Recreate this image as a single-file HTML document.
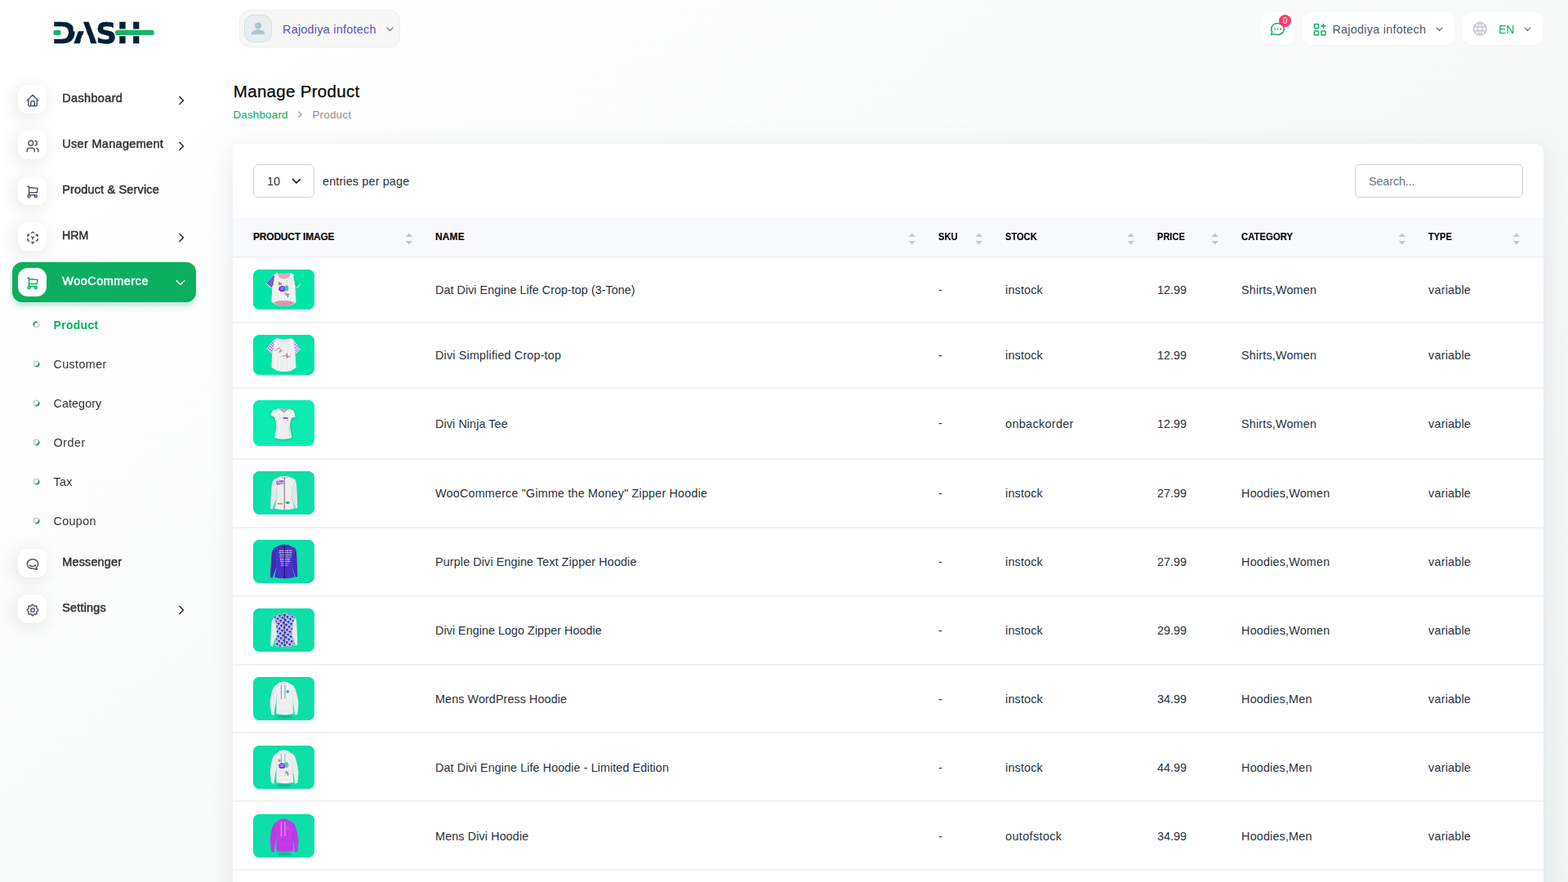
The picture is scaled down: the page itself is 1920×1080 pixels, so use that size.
<!DOCTYPE html>
<html lang="en">
<head>
<meta charset="utf-8">
<title>Manage Product</title>
<style>
*{box-sizing:border-box}
html,body{margin:0;padding:0}
body{width:1920px;height:1080px;overflow:hidden;position:relative;
 font-family:"Liberation Sans","DejaVu Sans",sans-serif;font-size:14px;color:#293240;
 background:linear-gradient(141.55deg,rgba(240,244,243,0) 3.46%,#f0f4f3 99.86%) 0 0/1920px 1290px no-repeat,#fff}
a{text-decoration:none;color:inherit}
ul{list-style:none;margin:0;padding:0}
svg{display:block}
.ic{fill:none;stroke:currentColor;stroke-width:2;stroke-linecap:round;stroke-linejoin:round}
.s16{stroke-width:1.600}.s18{stroke-width:1.800}.s20{stroke-width:2.200}

/* ---------- sidebar ---------- */
.sidebar{position:absolute;left:0;top:0;width:280px;height:1080px;will-change:transform;z-index:5}
.logo{position:absolute;left:60px;top:20px;width:140px;height:40px}
.nav{position:absolute;left:15px;top:97px;width:225px}
.nav>li{margin-bottom:7px}
.nav .link{display:block;position:relative;height:49px;border-radius:12px;color:#333}
.nav .micon{position:absolute;left:7px;top:7px;width:35px;height:35px;border-radius:12px;background:#fff;
 box-shadow:-3px 4px 23px rgba(0,0,0,.1);color:#525b69}
.nav .micon svg{position:absolute;left:8.500px;top:9.500px;width:18px;height:18px}
.nav .mtext{position:absolute;left:61.250px;top:0;height:49px;line-height:46px;font-size:14.500px;
 -webkit-text-stroke:.5px currentColor;white-space:nowrap}
.nav .arrow{position:absolute;right:11.500px;top:19px;width:14px;height:14px;color:#333}
.nav .active>.link{background:#0caf60;color:#fff;box-shadow:0 5px 7px -1px rgba(12,175,96,.3)}
.nav .active>.link .micon{color:#0caf60;box-shadow:none}
.nav .active>.link .arrow{color:#fff;right:12.500px;top:17.500px}
.sub li{position:relative;height:48px}
.sub li .dot{position:absolute;left:24.500px;top:22.500px;width:9px;height:9px}
.sub li a{position:absolute;left:50.500px;top:4px;line-height:48px;font-size:14.400px;color:#333;white-space:nowrap}
.sub li.on a{color:#0caf60;font-weight:700;font-size:14px}

/* ---------- header ---------- */
.hdr{position:absolute;left:280px;top:0;width:1640px;height:70px}
.pill{position:absolute;top:15px;height:40px;background:#fff;border-radius:12px;box-shadow:0 1px 3px rgba(0,0,0,.02)}
.pill .tx{position:absolute;top:1px;line-height:40px;font-size:14.400px;white-space:nowrap}
.user{position:absolute;left:13px;top:12px;width:197px;height:46px;background:#f7f7f7;border:1px solid #efefef;border-radius:13px}
.user .ava{position:absolute;left:5px;top:5px;width:34px;height:34px;border-radius:11px;background:#e9eef0;border:1px solid #c5ecd8;overflow:hidden}
.user .nm{position:absolute;left:52px;top:1px;line-height:44px;font-size:14.400px;color:#5b50c4;white-space:nowrap}
.chev{position:absolute;width:9px;height:5.500px;color:#6f7782}

/* ---------- main ---------- */
.title{position:absolute;left:285.800px;top:97px;margin:0;font-size:20.500px;line-height:30px;font-weight:400;color:#060606;
 -webkit-text-stroke:.25px currentColor;white-space:nowrap}
.crumb{position:absolute;left:285.400px;top:131px;height:20px;line-height:20px;font-size:13.400px;white-space:nowrap}
.crumb li{position:absolute;top:0}
.crumb .home{color:#0caf60;left:0}
.crumb .sep{left:78px;width:10px;height:20px;color:#8b9097}
.crumb .cur{color:#8b9097;left:97px}
.card{position:absolute;left:285px;top:176px;width:1605px;height:960px;background:#fff;border-radius:10px;
 box-shadow:0 6px 30px rgba(182,186,203,.3)}
.sel{position:absolute;left:25px;top:25px;width:75px;height:41px;border:1px solid #ced4da;border-radius:6px;background:#fff}
.sel span{position:absolute;left:16px;top:1px;line-height:39px;font-size:14.400px;color:#293240}
.sel svg{position:absolute;left:46px;top:16px;width:12px;height:8px;color:#111}
.epp{position:absolute;left:110px;top:26px;line-height:41px;font-size:14.400px;color:#293240;white-space:nowrap}
.search{position:absolute;left:1374px;top:25px;width:206px;height:41px;border:1px solid #ced4da;border-radius:6px;background:#fff}
.search span{position:absolute;left:16px;top:1px;line-height:39px;font-size:14.400px;color:#6c757d}
table{position:absolute;left:0;top:91px;width:1605px;border-collapse:separate;border-spacing:0;table-layout:fixed}
th{height:49px;background:#f8f9fd;border-bottom:2px solid #f1f1f1;text-align:left;padding:0 0 2px 24.300px;position:relative;
 font-size:12px;font-weight:700;text-transform:uppercase;color:#060606;white-space:nowrap;-webkit-text-stroke:.15px currentColor}
th:first-child,td:first-child{padding-left:25px}
th .sort{position:absolute;right:3.300px;top:17.500px;width:9.600px;height:15px;fill:#c6c6c6}
th:last-child .sort{right:28.300px}
td{border-bottom:2px solid #f1f1f1;padding:14px 0 15px 24.400px;vertical-align:middle;font-size:14.400px;color:#293240;white-space:nowrap}
tr.r3 td span{position:relative;top:1px}
tr.r1414 td{padding-top:14px;padding-bottom:14px}
tr.r1514 td{padding-top:15px;padding-bottom:14px}
.thumb{display:block;width:75px;border-radius:8px;overflow:hidden;background:#0be3a8}
.thumb svg{width:75px}
</style>
</head>
<body>
<aside class="sidebar"><svg class="logo" viewBox="60 20 140 40" role="img" aria-label="DASH">
<text x="63.300 90.400 117.300 143.200" y="53.200" font-family="DejaVu Sans, Liberation Sans, sans-serif" font-weight="700" font-size="36" fill="#022234" stroke="#022234" stroke-width=".5" stroke-linejoin="round">DASH</text>
<g fill="#fff">
<rect x="65" y="32.400" width="9" height="15.400"/>
<path d="M89.600 26.200H101.900L105.900 38.300H89.600Z"/>
<path d="M98.700 48.900H110L108.050 43.100H100.600Z"/>
<rect x="139.800" y="35.500" width="50.200" height="8.800" rx="4.400"/>
</g>
<g fill="#17b567">
<rect x="65.400" y="36.800" width="9.200" height="6.400" rx="3.200"/>
<rect x="141" y="36.700" width="47.800" height="6.400" rx="3.200"/>
</g>
</svg><ul class="nav"><li class=""><a class="link"><span class="micon"><svg class="ic" viewBox="0 0 24 24" aria-hidden="true"><polyline points="5 12 3 12 12 3 21 12 19 12"/><path d="M5 12v7a2 2 0 0 0 2 2h10a2 2 0 0 0 2 -2v-7"/><path d="M9 21v-6a2 2 0 0 1 2 -2h2a2 2 0 0 1 2 2v6"/></svg></span><span class="mtext" style="letter-spacing:0.339px;">Dashboard</span><svg class="arrow ic" viewBox="0 0 14 14" aria-hidden="true" style="stroke-width:1.700"><polyline points="5 2.500 9.500 7 5 11.500"/></svg></a></li><li class=""><a class="link"><span class="micon"><svg class="ic" viewBox="0 0 24 24" aria-hidden="true"><circle cx="9" cy="7" r="4"/><path d="M3 21v-2a4 4 0 0 1 4 -4h4a4 4 0 0 1 4 4v2"/><path d="M16 3.130a4 4 0 0 1 0 7.750"/><path d="M21 21v-2a4 4 0 0 0 -3 -3.850"/></svg></span><span class="mtext" style="letter-spacing:0.305px;">User Management</span><svg class="arrow ic" viewBox="0 0 14 14" aria-hidden="true" style="stroke-width:1.700"><polyline points="5 2.500 9.500 7 5 11.500"/></svg></a></li><li class=""><a class="link"><span class="micon"><svg class="ic" viewBox="0 0 24 24" aria-hidden="true"><circle cx="6" cy="19" r="2"/><circle cx="17" cy="19" r="2"/><path d="M17 17h-11v-14h-2"/><path d="M6 5l14 1l-1 7h-13"/></svg></span><span class="mtext" style="letter-spacing:0.155px;">Product &amp; Service</span></a></li><li class=""><a class="link"><span class="micon"><svg class="ic" viewBox="0 0 24 24" aria-hidden="true"><path d="M6 17.600l-2 -1.100v-2.500"/><path d="M4 10v-2.500l2 -1.100"/><path d="M10 4.100l2 -1.100l2 1.100"/><path d="M18 6.400l2 1.100v2.500"/><path d="M20 14v2.500l-2 1.120"/><path d="M14 19.900l-2 1.100l-2 -1.100"/><line x1="12" y1="12" x2="14" y2="10.900"/><line x1="18" y1="8.600" x2="20" y2="7.500"/><line x1="12" y1="12" x2="12" y2="14.500"/><line x1="12" y1="18.500" x2="12" y2="21"/><path d="M12 12l-2 -1.120"/><line x1="6" y1="8.600" x2="4" y2="7.500"/></svg></span><span class="mtext" style="display:inline-block;transform:scaleX(0.9762);transform-origin:0 50%;">HRM</span><svg class="arrow ic" viewBox="0 0 14 14" aria-hidden="true" style="stroke-width:1.700"><polyline points="5 2.500 9.500 7 5 11.500"/></svg></a></li><li class="active"><a class="link"><span class="micon"><svg class="ic" viewBox="0 0 24 24" aria-hidden="true"><circle cx="6" cy="19" r="2"/><circle cx="17" cy="19" r="2"/><path d="M17 17h-11v-14h-2"/><path d="M6 5l14 1l-1 7h-13"/></svg></span><span class="mtext" style="letter-spacing:0.480px;">WooCommerce</span><svg class="arrow ic" viewBox="0 0 14 14" aria-hidden="true" style="stroke-width:1.700"><polyline points="2.500 5 7 9.500 11.500 5"/></svg></a><ul class="sub"><li class="on"><svg class="dot" viewBox="0 0 9 9" aria-hidden="true" fill="none" stroke-width="1.900" stroke-linecap="round"><circle cx="4.500" cy="4.500" r="3.150" stroke="#cdd1dc"/><path d="M1.350 4.700A3.150 3.150 0 0 1 4.700 1.350" stroke="#0caf60"/></svg><a style="letter-spacing:0.301px;">Product</a></li><li class=""><svg class="dot" viewBox="0 0 9 9" aria-hidden="true" fill="none" stroke-width="1.900" stroke-linecap="round"><circle cx="4.500" cy="4.500" r="3.150" stroke="#cdd1dc"/><path d="M7.650 4.300A3.150 3.150 0 0 1 4.300 7.650" stroke="#0caf60"/></svg><a style="letter-spacing:0.341px;">Customer</a></li><li class=""><svg class="dot" viewBox="0 0 9 9" aria-hidden="true" fill="none" stroke-width="1.900" stroke-linecap="round"><circle cx="4.500" cy="4.500" r="3.150" stroke="#cdd1dc"/><path d="M7.650 4.300A3.150 3.150 0 0 1 4.300 7.650" stroke="#0caf60"/></svg><a style="letter-spacing:0.050px;">Category</a></li><li class=""><svg class="dot" viewBox="0 0 9 9" aria-hidden="true" fill="none" stroke-width="1.900" stroke-linecap="round"><circle cx="4.500" cy="4.500" r="3.150" stroke="#cdd1dc"/><path d="M7.650 4.300A3.150 3.150 0 0 1 4.300 7.650" stroke="#0caf60"/></svg><a style="letter-spacing:0.500px;">Order</a></li><li class=""><svg class="dot" viewBox="0 0 9 9" aria-hidden="true" fill="none" stroke-width="1.900" stroke-linecap="round"><circle cx="4.500" cy="4.500" r="3.150" stroke="#cdd1dc"/><path d="M7.650 4.300A3.150 3.150 0 0 1 4.300 7.650" stroke="#0caf60"/></svg><a style="letter-spacing:0.244px;">Tax</a></li><li class=""><svg class="dot" viewBox="0 0 9 9" aria-hidden="true" fill="none" stroke-width="1.900" stroke-linecap="round"><circle cx="4.500" cy="4.500" r="3.150" stroke="#cdd1dc"/><path d="M7.650 4.300A3.150 3.150 0 0 1 4.300 7.650" stroke="#0caf60"/></svg><a style="letter-spacing:0.314px;">Coupon</a></li></ul></li><li class=""><a class="link"><span class="micon"><svg class="ic" viewBox="0 0 24 24" aria-hidden="true"><path d="M17.802 17.292s.077 -.055 .200 -.149c1.843 -1.425 3 -3.490 3 -5.789c0 -4.286 -4.030 -7.764 -9 -7.764c-4.970 0 -9 3.478 -9 7.764c0 4.288 4.030 7.646 9 7.646c.424 0 1.120 -.028 2.088 -.084c1.262 .820 3.104 1.493 4.716 1.493c.499 0 .734 -.410 .414 -.828c-.486 -.596 -1.156 -1.551 -1.416 -2.290z"/><path d="M7.500 13.500c2.500 2.500 6.500 2.500 9 0"/></svg></span><span class="mtext" style="letter-spacing:0.125px;">Messenger</span></a></li><li class=""><a class="link"><span class="micon"><svg class="ic" viewBox="0 0 24 24" aria-hidden="true"><path d="M10.325 4.317c.426 -1.756 2.924 -1.756 3.350 0a1.724 1.724 0 0 0 2.573 1.066c1.543 -.940 3.310 .826 2.370 2.370a1.724 1.724 0 0 0 1.065 2.572c1.756 .426 1.756 2.924 0 3.350a1.724 1.724 0 0 0 -1.066 2.573c.940 1.543 -.826 3.310 -2.370 2.370a1.724 1.724 0 0 0 -2.572 1.065c-.426 1.756 -2.924 1.756 -3.350 0a1.724 1.724 0 0 0 -2.573 -1.066c-1.543 .940 -3.310 -.826 -2.370 -2.370a1.724 1.724 0 0 0 -1.065 -2.572c-1.756 -.426 -1.756 -2.924 0 -3.350a1.724 1.724 0 0 0 1.066 -2.573c-.940 -1.543 .826 -3.310 2.370 -2.370c1 .608 2.296 .070 2.572 -1.065z"/><circle cx="12" cy="12" r="3"/></svg></span><span class="mtext" style="letter-spacing:0.154px;">Settings</span><svg class="arrow ic" viewBox="0 0 14 14" aria-hidden="true" style="stroke-width:1.700"><polyline points="5 2.500 9.500 7 5 11.500"/></svg></a></li></ul></aside>
<header class="hdr">
<div class="user"><span class="ava"><svg viewBox="0 0 34 34" width="32" height="32"><circle cx="17" cy="13.200" r="4.300" fill="#b1c5ce"/><path d="M8 24.600c0-4 4-6.300 9-6.300s9 2.300 9 6.300z" fill="#b1c5ce"/></svg></span><span class="nm" style="letter-spacing:0.250px;">Rajodiya infotech</span><svg class="chev ic" viewBox="0 0 9 5.500" style="left:179px;top:20px;stroke-width:1.250"><polyline points="0.900 0.900 4.500 4.500 8.100 0.900"/></svg></div>
<div class="pill" style="left:1263px;width:42px"><span style="position:absolute;left:10.500px;top:10px;width:21px;height:21px;color:#0caf60"><svg class="ic s16" viewBox="0 0 24 24" aria-hidden="true"><path d="M3 20l1.300 -3.900a9 8 0 1 1 3.400 2.900l-4.700 1"/><g stroke-width="2.400"><line x1="12" y1="12" x2="12" y2="12.010"/><line x1="8" y1="12" x2="8" y2="12.010"/><line x1="16" y1="12" x2="16" y2="12.010"/></g></svg></span><span style="position:absolute;left:23px;top:2.500px;width:15px;height:15px;border-radius:50%;background:#ff3a6e;color:#fff;font-size:10px;line-height:15px;text-align:center">0</span></div>
<div class="pill" style="left:1315px;width:186px"><span style="position:absolute;left:11.300px;top:10.800px;width:20.500px;height:20.500px;color:#0caf60"><svg class="ic s18" viewBox="0 0 24 24" aria-hidden="true"><rect x="4" y="4" width="6" height="6" rx="1"/><rect x="4" y="14" width="6" height="6" rx="1"/><rect x="14" y="14" width="6" height="6" rx="1"/><line x1="14" y1="7" x2="20" y2="7"/><line x1="17" y1="4" x2="17" y2="10"/></svg></span><span class="tx" style="left:36.400px;color:#525b69;letter-spacing:0.258px;">Rajodiya infotech</span><svg class="chev ic" viewBox="0 0 9 5.500" style="left:163px;top:18px;stroke-width:1.250"><polyline points="0.900 0.900 4.500 4.500 8.100 0.900"/></svg></div>
<div class="pill" style="left:1511px;width:98px"><span style="position:absolute;left:11.200px;top:9.800px;width:20.500px;height:20.500px;color:#cbced3"><svg class="ic s20" viewBox="0 0 24 24" aria-hidden="true"><circle cx="12" cy="12" r="9"/><line x1="3.600" y1="9" x2="20.400" y2="9"/><line x1="3.600" y1="15" x2="20.400" y2="15"/><path d="M11.500 3a17 17 0 0 0 0 18"/><path d="M12.500 3a17 17 0 0 1 0 18"/></svg></span><span class="tx" style="left:44px;color:#0caf60;display:inline-block;transform:scaleX(0.9760);transform-origin:0 50%;">EN</span><svg class="chev ic" viewBox="0 0 9 5.500" style="left:75px;top:18px;stroke-width:1.250"><polyline points="0.900 0.900 4.500 4.500 8.100 0.900"/></svg></div>
</header>
<main>
<h4 class="title" style="letter-spacing:0.304px;">Manage Product</h4>
<ul class="crumb"><li class="home"><a style="letter-spacing:0.202px;">Dashboard</a></li><li class="sep"><svg class="ic" viewBox="0 0 8 10" style="position:absolute;left:0.500px;top:4.500px;width:6.500px;height:8.500px;stroke-width:1.400;color:#9aa0a8"><polyline points="2 1 6 5 2 9"/></svg></li><li class="cur"><span style="letter-spacing:0.221px;">Product</span></li></ul>
<section class="card">
<div class="sel"><span>10</span><svg class="ic" viewBox="0 0 12 8" style="stroke-width:1.600"><polyline points="1.500 1.500 6 6 10.500 1.500"/></svg></div>
<div class="epp"><span style="letter-spacing:0.143px;">entries per page</span></div>
<div class="search"><span style="letter-spacing:-0.127px;">Search...</span></div>
<table>
<thead><tr><th style="width:223.7px"><span style="letter-spacing:-0.201px;">Product Image</span><svg class="sort" viewBox="0 0 9 15" preserveAspectRatio="none" aria-hidden="true"><path d="M4.500 0.500L8.500 5H0.500z"/><path d="M4.500 14.500L8.500 10H0.500z"/></svg></th><th style="width:616px"><span style="letter-spacing:0.139px;">Name</span><svg class="sort" viewBox="0 0 9 15" preserveAspectRatio="none" aria-hidden="true"><path d="M4.500 0.500L8.500 5H0.500z"/><path d="M4.500 14.500L8.500 10H0.500z"/></svg></th><th style="width:82px"><span style="display:inline-block;transform:scaleX(0.9322);transform-origin:0 50%;">SKU</span><svg class="sort" viewBox="0 0 9 15" preserveAspectRatio="none" aria-hidden="true"><path d="M4.500 0.500L8.500 5H0.500z"/><path d="M4.500 14.500L8.500 10H0.500z"/></svg></th><th style="width:186px"><span style="display:inline-block;transform:scaleX(0.9253);transform-origin:0 50%;">Stock</span><svg class="sort" viewBox="0 0 9 15" preserveAspectRatio="none" aria-hidden="true"><path d="M4.500 0.500L8.500 5H0.500z"/><path d="M4.500 14.500L8.500 10H0.500z"/></svg></th><th style="width:103px"><span style="display:inline-block;transform:scaleX(0.9215);transform-origin:0 50%;">Price</span><svg class="sort" viewBox="0 0 9 15" preserveAspectRatio="none" aria-hidden="true"><path d="M4.500 0.500L8.500 5H0.500z"/><path d="M4.500 14.500L8.500 10H0.500z"/></svg></th><th style="width:229px"><span style="display:inline-block;transform:scaleX(0.9461);transform-origin:0 50%;">Category</span><svg class="sort" viewBox="0 0 9 15" preserveAspectRatio="none" aria-hidden="true"><path d="M4.500 0.500L8.500 5H0.500z"/><path d="M4.500 14.500L8.500 10H0.500z"/></svg></th><th style="width:165.3px"><span style="display:inline-block;transform:scaleX(0.9192);transform-origin:0 50%;">Type</span><svg class="sort" viewBox="0 0 9 15" preserveAspectRatio="none" aria-hidden="true"><path d="M4.500 0.500L8.500 5H0.500z"/><path d="M4.500 14.500L8.500 10H0.500z"/></svg></th></tr></thead>
<tbody>
<tr>
<td><a class="thumb" style="height:49px"><svg viewBox="0 0 75 49" height="49" aria-hidden="true"><rect width="75" height="49" fill="#01e4a7"/><g style="filter:blur(0.35px)"><path d="M28.9 3.9C33 6.2 42.5 6.2 46.4 3.9L50.6 7.2L57.7 17.9L53.2 22.7L51.4 20.8L52.5 39.9C49 43.5 43 45.1 38 45.1C32 45.1 26 43.3 22.4 39.6L23.3 21L22.1 22.7L16.2 17.2L24.3 7.2Z" fill="#f2f1f2"/><path d="M30.500 9v33M34.500 10v34M41.500 10v34M46 9v33" stroke="#e1e0e2" stroke-width=".5" fill="none"/><path d="M24.300 7.200L16.200 17.200L22.100 22.700L24.800 18.500C25.300 13.500 25.600 10.500 26.200 8.200Z" fill="#7a5fd0"/><path d="M50.600 7.200L57.700 17.900L53.200 22.700L51 19C50.600 14 50 10.500 49.200 8.200Z" fill="#10d3a0"/><path d="M16.200 17.200L22.100 22.700M57.700 17.900L53.200 22.700" stroke="#fff" stroke-width="1" fill="none"/><path d="M29.800 4.300C33.500 6.400 42 6.400 45.600 4.300C45 9.500 41.500 11.700 37.800 11.700C34 11.700 30.500 9.500 29.800 4.300Z" fill="#eba5ba"/><path d="M24.500 40.800C28 38.600 33 37.900 38 37.900C43 37.900 48 38.800 51 40.800C48 43.600 43 45.100 38 45.100C33 45.100 28 43.600 24.500 40.800Z" fill="#de93ad"/><ellipse cx="35.600" cy="23.700" rx="4.300" ry="3.400" fill="#6a2fe0"/><ellipse cx="41" cy="22.900" rx="2.300" ry="3.700" fill="#3fcbb2"/><path d="M33.500 22.500h4M33.500 24.300h3.500" stroke="#e9e2ff" stroke-width=".7" fill="none"/><path d="M30.800 19.500l1.200-4.200l.6 3.600l1.600-2.800l.2 3M39 30.500c.3-2.500 1.500-2.700 1.200 0c-.2 1.700.800 2.200 1.800-1.200l.4 4.700l.9-4.200l1 1.200" stroke="#222" stroke-width=".45" fill="none"/></g></svg></a></td>
<td><span style="letter-spacing:0.015px;">Dat Divi Engine Life Crop-top (3-Tone)</span></td>
<td>-</td>
<td><span style="letter-spacing:0.146px;">instock</span></td>
<td><span style="letter-spacing:-0.046px;">12.99</span></td>
<td><span style="letter-spacing:0.156px;">Shirts,Women</span></td>
<td><span style="letter-spacing:0.200px;">variable</span></td>
</tr>
<tr>
<td><a class="thumb" style="height:49px"><svg viewBox="0 0 75 49" height="49" aria-hidden="true"><rect width="75" height="49" fill="#01e4a7"/><g style="filter:blur(0.35px)"><defs><pattern id="pdots" width="2.600" height="2.600" patternUnits="userSpaceOnUse" patternTransform="rotate(38)"><rect width="2.600" height="2.600" fill="#f4f2fb"/><circle cx="1.300" cy="1.300" r=".85" fill="#5a36e0"/></pattern></defs><path d="M28.9 3.9C33 6.2 42.5 6.2 46.4 3.9L50.6 7.2L57.7 17.9L53.2 22.7L51.4 20.8L52.5 39.9C49 43.5 43 45.1 38 45.1C32 45.1 26 43.3 22.4 39.6L23.3 21L22.1 22.7L16.2 17.2L24.3 7.2Z" fill="#f2f1f2"/><path d="M30.500 9v33M34.500 10v34M41.500 10v34M46 9v33" stroke="#e1e0e2" stroke-width=".5" fill="none"/><path d="M24.300 7.200L16.200 17.200L22.100 22.700L24.800 18.500C25.300 13.500 25.600 10.500 26.200 8.200Z" fill="url(#pdots)"/><path d="M50.600 7.200L57.700 17.900L53.200 22.700L51 19C50.600 14 50 10.500 49.200 8.200Z" fill="url(#pdots)"/><path d="M29.800 4.300C33.500 6.400 42 6.400 45.600 4.300C45 8.500 41.500 10.300 37.800 10.300C34 10.300 30.500 8.500 29.800 4.300Z" fill="#e4e3e5"/><path d="M26.800 20c1.500-2 3.500-3.700 5.200-3.700c2.200 0 1 3.700.2 5.200c2-2.500 3.300-2.700 4-1.700M35.200 26.600c1.200-1.800 2.400-1.600 2.200-.200c1.400-1.400 2.400-.800 3 0l1-3.600l.4 5.600l1-2.800l1.400 1.200l1.300-.6" stroke="#222" stroke-width=".45" fill="none"/></g></svg></a></td>
<td><span style="letter-spacing:0.152px;">Divi Simplified Crop-top</span></td>
<td>-</td>
<td><span style="letter-spacing:0.146px;">instock</span></td>
<td><span style="letter-spacing:-0.046px;">12.99</span></td>
<td><span style="letter-spacing:0.156px;">Shirts,Women</span></td>
<td><span style="letter-spacing:0.200px;">variable</span></td>
</tr>
<tr class="r3">
<td><a class="thumb" style="height:56px"><svg viewBox="0 0 75 56" height="56" aria-hidden="true"><rect width="75" height="56" fill="#0cebb0"/><g style="filter:blur(0.35px)"><path d="M31.200 10.200L37.600 15.600L43.800 10.600L49.300 12.400C50.600 15 51.300 17.800 51.600 20.500L47 22.100C46 25.500 45.100 28.500 45.100 31.500C45.300 36.500 46.700 41.500 47.400 45.700C44 47.300 40 47.700 36.700 47.700C33 47.700 29 47.200 26 45.700C26.800 41.500 28.200 36.500 28.200 31.500C28.100 28.500 27.300 25 26.300 21.100L21.400 18.500C22 16 22.700 14 23.700 12.400Z" fill="#0a9f77" opacity=".55" transform="translate(.6 1)" style="filter:blur(1.4px)"/><path d="M31.200 10.200L37.600 15.600L43.800 10.600L49.300 12.400C50.600 15 51.300 17.800 51.600 20.500L47 22.100C46 25.500 45.100 28.500 45.100 31.500C45.300 36.500 46.700 41.500 47.400 45.700C44 47.300 40 47.700 36.700 47.700C33 47.700 29 47.200 26 45.700C26.800 41.500 28.200 36.500 28.200 31.500C28.100 28.500 27.300 25 26.300 21.100L21.400 18.500C22 16 22.700 14 23.700 12.400Z" fill="#f1f0f1"/><path d="M31.200 10.200C33.500 9.700 41.500 9.900 43.800 10.600L37.600 15.600Z" fill="#b4b3b5"/><path d="M28.500 24c1 6 1 16-.5 21M45 24c-1 6-1 16 .5 21" stroke="#dddcdf" stroke-width="1.500" fill="none"/><circle cx="33.600" cy="21.800" r="2.300" fill="none" stroke="#9fded8" stroke-width=".5"/><rect x="36.600" y="20.900" width="6.200" height="2.100" rx=".4" fill="#9a4fe0"/><path d="M41.500 24.500h1.800" stroke="#333" stroke-width=".5"/></g></svg></a></td>
<td><span style="letter-spacing:0.066px;">Divi Ninja Tee</span></td>
<td>-</td>
<td><span style="letter-spacing:0.331px;">onbackorder</span></td>
<td><span style="letter-spacing:-0.046px;">12.99</span></td>
<td><span style="letter-spacing:0.156px;">Shirts,Women</span></td>
<td><span style="letter-spacing:0.200px;">variable</span></td>
</tr>
<tr>
<td><a class="thumb" style="height:53px"><svg viewBox="0 0 75 53" height="53" aria-hidden="true"><rect width="75" height="53" fill="#0cdfa7"/><g style="filter:blur(0.35px)"><path d="M25 10.400C23.800 12.200 23 14.500 22.700 16.900C21.800 26 21.200 37 21.100 46.100L23.600 46.800C24.800 42.500 27 37.500 28.700 33C28.900 27 28.300 22 27.900 18.200Z" fill="#e6e5e7"/><path d="M51.600 10.400C52.400 12.200 53 14.500 53.200 16.900C53.800 26 54.100 36 54.200 44.800L52 46C50.900 42 49.300 37.500 47.900 33C47.800 27 48.300 22 48.700 18.200Z" fill="#e6e5e7"/><path d="M33.400 6.600C36.500 5.900 40 5.900 43.100 6.600L51.600 10.400C50 14.500 48.900 17 48.700 18.200C48.500 23 47.700 27 47.700 31.200C48 36 49.600 41 50.600 45.400C46.500 46.800 42 47 38.300 47C34.500 47 30.500 46.800 26.300 45.400C27.300 41 28.700 36 28.900 31.200C28.900 27 28.100 23 27.900 18.200C27.600 17 26.500 14.500 25 10.400Z" fill="#efeeef" stroke="#e6e5e7" stroke-width=".4"/><path d="M33.400 6.600C35 8.200 37 9 38.300 9.300C39.600 9 41.500 8.200 43.100 6.600" fill="none" stroke="#555" stroke-width=".5" opacity=".7"/><path d="M38.300 7.200V46.800" stroke="#555" stroke-width=".8" fill="none"/><rect x="28.200" y="11.400" width="9.200" height="4.700" rx="1.300" fill="#9b5fc3" transform="rotate(-6 32.800 13.700)"/><path d="M29.800 14.600l1-2l.8 2l.9-2M33.600 13.600a.9.900 0 1 0 .1 0M35.500 13.400a.9.900 0 1 0 .1 0" stroke="#fff" stroke-width=".55" fill="none"/><ellipse cx="33.600" cy="39.700" rx="3" ry="1" fill="#c8a35a"/><ellipse cx="30.800" cy="39.800" rx=".8" ry=".7" fill="#4a6aa5"/><ellipse cx="42.300" cy="38.600" rx="2.600" ry="1.300" fill="#1f8f78"/><ellipse cx="44" cy="38.900" rx="1.200" ry=".7" fill="#c8a35a"/><path d="M28.900 19c1 8 .6 18-1.600 26M47.700 19c-1 8-.6 18 1.600 26" stroke="#dcdbdd" stroke-width=".8" fill="none"/></g></svg></a></td>
<td><span style="letter-spacing:0.168px;">WooCommerce &quot;Gimme the Money&quot; Zipper Hoodie</span></td>
<td>-</td>
<td><span style="letter-spacing:0.146px;">instock</span></td>
<td><span style="letter-spacing:-0.046px;">27.99</span></td>
<td><span style="letter-spacing:0.162px;">Hoodies,Women</span></td>
<td><span style="letter-spacing:0.200px;">variable</span></td>
</tr>
<tr>
<td><a class="thumb" style="height:53px"><svg viewBox="0 0 75 53" height="53" aria-hidden="true"><rect width="75" height="53" fill="#0cdfa7"/><g style="filter:blur(0.35px)"><path d="M25 10.400C23.800 12.200 23 14.500 22.700 16.900C21.800 26 21.200 37 21.100 46.100L23.600 46.800C24.800 42.500 27 37.500 28.700 33C28.900 27 28.300 22 27.900 18.200Z" fill="#4329b8"/><path d="M51.600 10.400C52.400 12.200 53 14.500 53.200 16.900C53.800 26 54.100 36 54.200 44.800L52 46C50.900 42 49.300 37.500 47.900 33C47.800 27 48.300 22 48.700 18.200Z" fill="#4329b8"/><path d="M33.400 6.600C36.500 5.900 40 5.900 43.100 6.600L51.600 10.400C50 14.500 48.900 17 48.700 18.200C48.500 23 47.700 27 47.700 31.200C48 36 49.600 41 50.600 45.400C46.500 46.800 42 47 38.300 47C34.500 47 30.500 46.800 26.300 45.400C27.300 41 28.700 36 28.900 31.200C28.900 27 28.100 23 27.900 18.200C27.600 17 26.500 14.500 25 10.400Z" fill="#4a2fca" stroke="#4329b8" stroke-width=".4"/><path d="M33.400 6.600C35 8.200 37 9 38.300 9.300C39.600 9 41.500 8.200 43.100 6.600" fill="none" stroke="#1a145e" stroke-width=".5" opacity=".7"/><path d="M38.300 7.200V46.800" stroke="#1a145e" stroke-width=".8" fill="none"/><path d="M32 13.20H47.5" stroke="#fff" stroke-width="1.050" stroke-dasharray="2.300 .5 1.200 .4" opacity="0.95" fill="none"/><path d="M31.7 15.82H47.6" stroke="#fff" stroke-width="1.050" stroke-dasharray="2.300 .5 1.200 .4" opacity="0.9" fill="none"/><path d="M32.5 18.44H47" stroke="#fff" stroke-width="1.050" stroke-dasharray="2.300 .5 1.200 .4" opacity="0.8" fill="none"/><path d="M32.5 21.06H46.5" stroke="#fff" stroke-width="1.050" stroke-dasharray="2.300 .5 1.200 .4" opacity="0.85" fill="none"/><path d="M33 23.68H45.5" stroke="#fff" stroke-width="1.050" stroke-dasharray="2.300 .5 1.200 .4" opacity="0.95" fill="none"/><path d="M33 26.30H45.5" stroke="#fff" stroke-width="1.050" stroke-dasharray="2.300 .5 1.200 .4" opacity="0.95" fill="none"/><path d="M34 28.92H43.5" stroke="#fff" stroke-width="1.050" stroke-dasharray="2.300 .5 1.200 .4" opacity="0.7" fill="none"/><path d="M34 31.54H43" stroke="#fff" stroke-width="1.050" stroke-dasharray="2.300 .5 1.200 .4" opacity="0.6" fill="none"/><path d="M38.300 7.200V46.800" stroke="#1a145e" stroke-width=".9" fill="none"/></g></svg></a></td>
<td><span style="letter-spacing:0.095px;">Purple Divi Engine Text Zipper Hoodie</span></td>
<td>-</td>
<td><span style="letter-spacing:0.146px;">instock</span></td>
<td><span style="letter-spacing:-0.046px;">27.99</span></td>
<td><span style="letter-spacing:0.162px;">Hoodies,Women</span></td>
<td><span style="letter-spacing:0.200px;">variable</span></td>
</tr>
<tr>
<td><a class="thumb" style="height:53px"><svg viewBox="0 0 75 53" height="53" aria-hidden="true"><rect width="75" height="53" fill="#0cdfa7"/><g style="filter:blur(0.35px)"><defs><pattern id="chk" width="4.300" height="4.300" patternUnits="userSpaceOnUse" patternTransform="rotate(35)"><rect width="4.300" height="4.300" fill="#f1f0f3"/><rect x=".200" y=".200" width="3" height="3" rx=".6" fill="#5323d8"/><rect x="2.300" y="2.500" width="1.900" height="1.400" fill="#1fc7b0"/></pattern></defs><path d="M25 10.400C23.800 12.200 23 14.500 22.700 16.900C21.800 26 21.200 37 21.100 46.100L23.600 46.800C24.800 42.500 27 37.500 28.700 33C28.900 27 28.300 22 27.900 18.200Z" fill="#e9e8ea"/><path d="M51.600 10.400C52.400 12.200 53 14.500 53.200 16.900C53.800 26 54.100 36 54.200 44.800L52 46C50.900 42 49.300 37.500 47.900 33C47.800 27 48.300 22 48.700 18.200Z" fill="#e9e8ea"/><path d="M33.400 6.600C36.500 5.900 40 5.900 43.100 6.600L51.600 10.400C50 14.500 48.900 17 48.700 18.200C48.500 23 47.700 27 47.700 31.200C48 36 49.600 41 50.600 45.400C46.500 46.800 42 47 38.300 47C34.500 47 30.500 46.800 26.300 45.400C27.300 41 28.700 36 28.900 31.200C28.900 27 28.100 23 27.900 18.200C27.600 17 26.500 14.500 25 10.400Z" fill="url(#chk)" stroke="#e9e8ea" stroke-width=".4"/><path d="M33.400 6.600C35 8.200 37 9 38.300 9.300C39.600 9 41.500 8.200 43.100 6.600" fill="none" stroke="#3a3550" stroke-width=".5" opacity=".7"/><path d="M38.300 7.200V46.800" stroke="#3a3550" stroke-width=".8" fill="none"/></g></svg></a></td>
<td><span style="letter-spacing:0.013px;">Divi Engine Logo Zipper Hoodie</span></td>
<td>-</td>
<td><span style="letter-spacing:0.146px;">instock</span></td>
<td><span style="letter-spacing:-0.046px;">29.99</span></td>
<td><span style="letter-spacing:0.162px;">Hoodies,Women</span></td>
<td><span style="letter-spacing:0.200px;">variable</span></td>
</tr>
<tr class="r1414">
<td><a class="thumb" style="height:53px"><svg viewBox="0 0 75 53" height="53" aria-hidden="true"><rect width="75" height="53" fill="#0cdfa7"/><g style="filter:blur(0.35px)"><ellipse cx="38" cy="48.700" rx="9.500" ry="1.700" fill="#06a87c" opacity=".75" style="filter:blur(1.100px)"/><path d="M26.300 11.100C24.500 13.500 23.200 16.500 22.400 20.200C21.300 25 20.800 29 20.800 33.100C21 38 21.700 42.500 22.400 46.100L25.600 46.400C26 41.500 26.800 36.500 27.600 32.500C28.200 28.500 28.700 24 28.900 20.200Z" fill="#eeedee"/><path d="M49.600 11.100C51.300 13.500 52.500 16.500 53.200 20.200C54.500 25 55.300 29 55.500 33.100C55.300 38 54.800 42.500 54.200 46.100L50.900 46.400C50.500 41.500 49.800 36.500 49 32.500C48.400 28.500 47.900 24 47.700 20.200Z" fill="#eeedee"/><path d="M32.800 6.600C35.500 5.600 39 5.600 41.800 6.600C44 8 47 9.800 49.600 11.100L47.700 20.200L49 44.800C45 45.800 42 46 38.800 46C35.500 46 32 45.800 28.600 44.800L28.900 20.200L26.300 11.100C29 9.800 31 8 32.800 6.600Z" fill="#f0eff0" stroke="#f0eff0" stroke-width=".5"/><path d="M33.400 7.200C35.500 9 39.500 9 41.300 7.200C40 6.600 34.800 6.600 33.400 7.200Z" fill="#e2e1e4"/><path d="M28.600 41.200C32 42 45.500 42 49 41.200M31.500 31.200L29.400 40.900M45.700 31.200L48.200 40.900M31.500 31.200H45.700" stroke="#e2e1e4" stroke-width=".6" fill="none"/><path d="M28.900 20.200C28.500 26 28 30 27.600 32.500M47.700 20.200C48 26 48.500 30 49 32.500" stroke="#e2e1e4" stroke-width=".7" fill="none"/><path d="M34.400 9.600V27.300M38.900 9.600V26.800" stroke="#1a84ba" stroke-width=".7" fill="none"/><circle cx="42.200" cy="17.900" r="2" fill="#6db9dc"/><path d="M40.700 17.200h3M41.200 16.300l1 3l.9-3" stroke="#1b8ec6" stroke-width=".5" fill="none"/></g></svg></a></td>
<td><span style="letter-spacing:0.059px;">Mens WordPress Hoodie</span></td>
<td>-</td>
<td><span style="letter-spacing:0.146px;">instock</span></td>
<td><span style="letter-spacing:-0.046px;">34.99</span></td>
<td><span style="letter-spacing:0.156px;">Hoodies,Men</span></td>
<td><span style="letter-spacing:0.200px;">variable</span></td>
</tr>
<tr class="r1514">
<td><a class="thumb" style="height:53px"><svg viewBox="0 0 75 53" height="53" aria-hidden="true"><rect width="75" height="53" fill="#0cdfa7"/><g style="filter:blur(0.35px)"><ellipse cx="38" cy="48.700" rx="9.500" ry="1.700" fill="#06a87c" opacity=".75" style="filter:blur(1.100px)"/><path d="M26.300 11.100C24.500 13.500 23.200 16.500 22.400 20.200C21.300 25 20.800 29 20.800 33.100C21 38 21.700 42.500 22.400 46.100L25.600 46.400C26 41.500 26.800 36.500 27.600 32.500C28.200 28.500 28.700 24 28.900 20.200Z" fill="#eeedee"/><path d="M49.600 11.100C51.300 13.500 52.500 16.500 53.200 20.200C54.500 25 55.300 29 55.500 33.100C55.300 38 54.800 42.500 54.200 46.100L50.900 46.400C50.500 41.500 49.800 36.500 49 32.500C48.400 28.500 47.900 24 47.700 20.200Z" fill="#eeedee"/><path d="M32.800 6.600C35.500 5.600 39 5.600 41.800 6.600C44 8 47 9.800 49.600 11.100L47.700 20.200L49 44.800C45 45.800 42 46 38.800 46C35.500 46 32 45.800 28.600 44.800L28.900 20.200L26.300 11.100C29 9.800 31 8 32.800 6.600Z" fill="#f0eff0" stroke="#f0eff0" stroke-width=".5"/><path d="M33.400 7.200C35.500 9 39.500 9 41.300 7.200C40 6.600 34.800 6.600 33.400 7.200Z" fill="#e2e1e4"/><path d="M28.600 41.200C32 42 45.500 42 49 41.200M31.500 31.200L29.400 40.900M45.700 31.200L48.200 40.900M31.500 31.200H45.700" stroke="#e2e1e4" stroke-width=".6" fill="none"/><path d="M28.900 20.200C28.500 26 28 30 27.600 32.500M47.700 20.200C48 26 48.500 30 49 32.500" stroke="#e2e1e4" stroke-width=".7" fill="none"/><path d="M34.400 9.600V27.300M38.900 9.600V26.800" stroke="#12cfa0" stroke-width=".7" fill="none"/><ellipse cx="35.400" cy="24.700" rx="4.200" ry="3.500" fill="#7a3fe6"/><ellipse cx="41" cy="23.600" rx="2.300" ry="3.600" fill="#4fd0b8"/><path d="M33.500 23.500h4M33.500 25.300h3.500" stroke="#ece6ff" stroke-width=".7" fill="none"/><path d="M31 19.500l.8-3l.5 3.300l1.500-2.500M39.500 35c.3-3 1.200-4.800 1.400-2c.1 1.800.5 1.600 1.200-1l.3 4.600l.9-2.500" stroke="#2a2a2a" stroke-width=".45" fill="none"/></g></svg></a></td>
<td><span style="letter-spacing:0.060px;">Dat Divi Engine Life Hoodie - Limited Edition</span></td>
<td>-</td>
<td><span style="letter-spacing:0.146px;">instock</span></td>
<td><span style="letter-spacing:-0.046px;">44.99</span></td>
<td><span style="letter-spacing:0.156px;">Hoodies,Men</span></td>
<td><span style="letter-spacing:0.200px;">variable</span></td>
</tr>
<tr class="r1514">
<td><a class="thumb" style="height:53px"><svg viewBox="0 0 75 53" height="53" aria-hidden="true"><rect width="75" height="53" fill="#0cdfa7"/><g style="filter:blur(0.35px)"><ellipse cx="38" cy="48.700" rx="9.500" ry="1.700" fill="#06a87c" opacity=".75" style="filter:blur(1.100px)"/><path d="M26.300 11.100C24.500 13.500 23.200 16.500 22.400 20.200C21.300 25 20.800 29 20.800 33.100C21 38 21.700 42.500 22.400 46.100L25.600 46.400C26 41.500 26.800 36.500 27.600 32.500C28.200 28.500 28.700 24 28.900 20.200Z" fill="#c238e6"/><path d="M49.600 11.100C51.300 13.500 52.500 16.500 53.200 20.200C54.500 25 55.300 29 55.500 33.100C55.300 38 54.800 42.500 54.200 46.100L50.900 46.400C50.500 41.500 49.800 36.500 49 32.500C48.400 28.500 47.900 24 47.700 20.200Z" fill="#c238e6"/><path d="M32.800 6.600C35.500 5.600 39 5.600 41.800 6.600C44 8 47 9.800 49.600 11.100L47.700 20.200L49 44.800C45 45.800 42 46 38.800 46C35.500 46 32 45.800 28.600 44.800L28.900 20.200L26.300 11.100C29 9.800 31 8 32.800 6.600Z" fill="#c63bea" stroke="#c63bea" stroke-width=".5"/><path d="M33.400 7.200C35.500 9 39.500 9 41.300 7.200C40 6.600 34.800 6.600 33.400 7.200Z" fill="#b330d9"/><path d="M28.600 41.200C32 42 45.500 42 49 41.200M31.500 31.200L29.400 40.900M45.700 31.200L48.200 40.900M31.500 31.200H45.700" stroke="#b330d9" stroke-width=".6" fill="none"/><path d="M28.900 20.200C28.500 26 28 30 27.600 32.500M47.700 20.200C48 26 48.500 30 49 32.500" stroke="#b330d9" stroke-width=".7" fill="none"/><path d="M34.400 9.600V27.300M38.900 9.600V26.800" stroke="#f1d8f7" stroke-width=".7" fill="none"/><circle cx="42.200" cy="17.500" r="1.600" fill="none" stroke="#df8bf3" stroke-width=".45"/></g></svg></a></td>
<td><span style="letter-spacing:0.093px;">Mens Divi Hoodie</span></td>
<td>-</td>
<td><span style="letter-spacing:0.375px;">outofstock</span></td>
<td><span style="letter-spacing:-0.046px;">34.99</span></td>
<td><span style="letter-spacing:0.156px;">Hoodies,Men</span></td>
<td><span style="letter-spacing:0.200px;">variable</span></td>
</tr>
</tbody>
</table>
</section>
</main>
</body>
</html>
